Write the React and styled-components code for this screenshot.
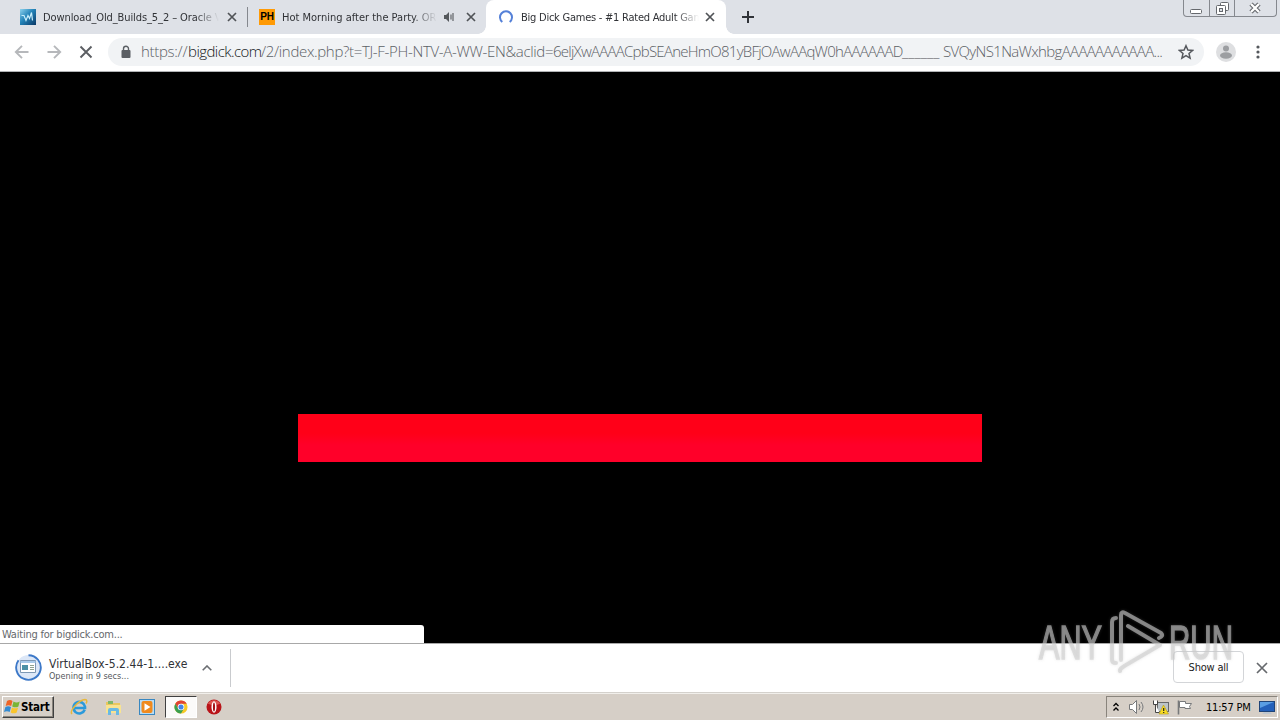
import React from 'react';
import styled, { createGlobalStyle } from 'styled-components';

const GlobalStyle = createGlobalStyle`
  * {
    box-sizing: border-box;
  }

  body {
    margin: 0;
    overflow: hidden;
    font-family: 'DejaVu Sans Condensed', 'DejaVu Sans', sans-serif;
    font-stretch: condensed;
    font-size: 11px;
    color: #303236;
  }

  svg {
    display: block;
    flex: none;
  }
`;

const Screen = styled.div`
  position: relative;
  width: 1280px;
  height: 720px;
  display: flex;
  flex-direction: column;
  overflow: hidden;
  background: #000;
`;

const TabStrip = styled.div`
  height: 34px;
  display: flex;
  background: #dee1e7;
`;

const Tab = styled.div`
  position: relative;
  width: ${(props) => props.$width}px;
  height: 34px;
  padding-left: ${(props) => props.$pad}px;
  padding-right: ${(props) => (props.$active ? 12 : 11)}px;
  display: flex;
  align-items: center;
  background: ${(props) => (props.$active ? '#fff' : 'transparent')};
  border-radius: ${(props) => (props.$active ? '8px 8px 0 0' : '0')};

  &::before,
  &::after {
    content: '';
    display: ${(props) => (props.$active ? 'block' : 'none')};
    position: absolute;
    bottom: 0;
    width: 8px;
    height: 8px;
  }

  &::before {
    left: -8px;
    background: radial-gradient(circle at 0 0, transparent 7.5px, #fff 8px);
  }

  &::after {
    right: -8px;
    background: radial-gradient(circle at 100% 0, transparent 7.5px, #fff 8px);
  }
`;

const TabTitle = styled.div`
  width: ${(props) => props.$width}px;
  margin-left: 7px;
  margin-right: auto;
  padding-top: 1px;
  overflow: hidden;
  white-space: nowrap;
  line-height: 16px;
  letter-spacing: ${(props) => props.$spacing || 0}px;
  mask-image: linear-gradient(to right, #000 calc(100% - 24px), transparent);
`;

const TabDivider = styled.div`
  width: 1px;
  height: 20px;
  margin-top: 7px;
  background: #85888e;
`;

const PhIcon = styled.div`
  width: 16px;
  height: 16px;
  flex: none;
  background: #ff9a05;
  color: #000;
  font: bold 10px/16px 'Liberation Sans', sans-serif;
  letter-spacing: -0.2px;
  text-align: center;
`;

const NewTab = styled.div`
  width: 28px;
  margin-left: 8px;
  display: flex;
  align-items: center;
  justify-content: center;
`;

const WindowButtons = styled.div`
  width: 94px;
  height: 17px;
  margin-left: auto;
  margin-right: 3px;
  display: grid;
  grid-template-columns: 25px 25px 1fr;
  border: 1px solid #85888e;
  border-top: none;
  border-radius: 0 0 4px 4px;
`;

const WindowButton = styled.div`
  display: flex;
  align-items: center;
  justify-content: center;

  & + & {
    border-left: 1px solid #85888e;
  }
`;

const Toolbar = styled.div`
  height: 38px;
  padding: 0 13px 1px 14px;
  display: flex;
  align-items: center;
  background: #fff;
  border-bottom: 1px solid #b1b3b5;
`;

const NavButtons = styled.div`
  width: 94px;
  display: flex;
  gap: 16px;
`;

const AddressBar = styled.div`
  width: 1096px;
  height: 28px;
  padding: 0 10px;
  display: flex;
  align-items: center;
  background: #f1f3f5;
  border-radius: 14px;
`;

const Url = styled.div`
  width: 1029px;
  margin-left: 7px;
  margin-right: auto;
  padding-bottom: 2px;
  display: flex;
  font: 300 15px/20px 'Open Sans', sans-serif;
  font-stretch: normal;
  white-space: pre;
  color: #5c6166;
`;

const UrlPart = styled.span`
  width: ${(props) => props.$width}px;
  flex: none;
  letter-spacing: ${(props) => props.$spacing}px;
  color: ${(props) => (props.$host ? '#15171a' : 'inherit')};
`;

const Page = styled.div`
  height: 571px;
  padding-top: 342px;
  background: #000;
`;

const Banner = styled.div`
  width: 684px;
  height: 48px;
  margin: 0 auto;
  background: linear-gradient(#ff0018, #ff0018 40%, #ff0029 65%, #ff0029);
`;

const StatusBubble = styled.div`
  position: absolute;
  left: 0;
  top: 625px;
  width: 424px;
  height: 18px;
  padding-left: 2px;
  background: #fff;
  border-radius: 0 3px 0 0;
  line-height: 19px;
  letter-spacing: -0.22px;
  color: #65686c;
`;

const Shelf = styled.div`
  height: 50px;
  padding: 0 13px 1px 15px;
  display: flex;
  align-items: center;
  background: #fff;
  border-top: 1px solid #a8a8a8;
  border-bottom: 1px solid #d4d1cc;
`;

const Download = styled.div`
  width: 216px;
  height: 38px;
  padding-right: 18px;
  display: flex;
  align-items: center;
  border-right: 1px solid #c9cbce;
`;

const FileInfo = styled.div`
  margin-left: 7px;
  margin-right: auto;
  padding-top: 3px;
  white-space: nowrap;
`;

const FileName = styled.div`
  font-size: 12px;
  line-height: 13px;
  letter-spacing: 0.05px;
`;

const FileStatus = styled.div`
  font-size: 9px;
  line-height: 10px;
  color: #55585c;
`;

const ShowAll = styled.div`
  width: 71px;
  height: 32px;
  margin-left: auto;
  margin-right: 13px;
  margin-bottom: 2px;
  border: 1px solid #d3d5d8;
  border-radius: 4px;
  line-height: 31px;
  text-align: center;
  letter-spacing: -0.2px;
  color: #222;
`;

const Taskbar = styled.div`
  height: 27px;
  padding: 2px;
  display: flex;
  align-items: center;
  background: #d6cfc7;
  border-top: 1px solid #f1efeb;
`;

const StartButton = styled.div`
  width: 52px;
  height: 22px;
  padding-left: 1px;
  display: flex;
  align-items: center;
  border: 1px solid;
  border-color: #fff #404040 #404040 #fff;
  box-shadow: inset -1px -1px #89847c;
  font-size: 11.5px;
  font-weight: bold;
  letter-spacing: -0.2px;
  color: #000;
`;

const Launchers = styled.div`
  margin-left: 8px;
  display: flex;
`;

const Launcher = styled.div`
  width: ${(props) => (props.$pressed ? 32 : 34)}px;
  height: 22px;
  margin-left: ${(props) => (props.$pressed ? 1 : 0)}px;
  display: flex;
  align-items: center;
  justify-content: center;
  border: 1px solid;
  border-color: ${(props) => (props.$pressed ? '#404040 #fff #fff #404040' : 'transparent')};
  background: ${(props) => (props.$pressed ? '#fbfaf9' : 'transparent')};
`;

const Tray = styled.div`
  width: 172px;
  height: 22px;
  margin-left: auto;
  padding: 0 2px 0 6px;
  display: flex;
  align-items: center;
  border: 1px solid;
  border-color: #89847c #fff #fff #89847c;
  color: #000;
`;

const Clock = styled.div`
  width: 47px;
  margin-left: 13px;
  margin-right: auto;
  white-space: nowrap;
  letter-spacing: -0.2px;
`;

const TrayIcon = styled.div`
  margin-left: ${(props) => props.$gap || 0}px;
`;

const Watermark = styled.div`
  position: absolute;
  left: 1036px;
  top: 606px;
  filter: drop-shadow(0 0 1.5px rgba(150, 150, 150, 0.4));
`;

const CloseIcon = ({ size = 8, color = '#505357', width = 1.7 }) => (
    <svg width={size} height={size} viewBox="0 0 8 8" overflow="visible">
        <path d="M0 0 8 8M8 0 0 8" stroke={color} strokeWidth={(width * 8) / size} fill="none" />
    </svg>
);

const VmIcon = () => (
    <svg width="16" height="16" viewBox="0 0 16 16">
        <defs>
            <linearGradient id="vm" x1="0" y1="0" x2="1" y2="1">
                <stop offset="0" stopColor="#8ed3ee" />
                <stop offset=".45" stopColor="#2383b8" />
                <stop offset="1" stopColor="#0a3765" />
            </linearGradient>
        </defs>
        <rect width="16" height="16" fill="url(#vm)" />
        <path d="M1.500 6.500h2.500l2 5 2-5 1.500 3 2-6 1 8" stroke="#c9effc" strokeWidth="1.200" fill="none" />
    </svg>
);

const SpeakerIcon = () => (
    <svg width="11" height="10" viewBox="0 0 11 10">
        <path d="M0 3h2l3-3v10L2 7H0z" fill="#55585c" />
        <path d="M7 2.500v5M9 1v8" stroke="#55585c" strokeWidth="1.100" />
    </svg>
);

const Spinner = () => (
    <svg width="16" height="16" viewBox="0 0 16 16">
        <path d="M4.300 13A6 6 0 1 1 11.700 13" stroke="#5581d8" strokeWidth="2" fill="none" />
    </svg>
);

const Arrow = ({ flip }) => (
    <svg width="16" height="16" viewBox="0 0 16 16">
        <path
            d="M14.500 8H2M8 1.800 1.800 8 8 14.200"
            transform={flip ? 'translate(16 0) scale(-1 1)' : undefined}
            stroke="#b6b8bb"
            strokeWidth="1.900"
            fill="none"
        />
    </svg>
);

const StartFlag = () => (
    <svg width="17" height="16" viewBox="0 0 17 16">
        <path d="M3 2Q6 0 8.500 2L7.200 7Q4.500 5.300 1.700 7z" fill="#ee6426" />
        <path d="M9.500 2.500Q12.500 4.300 15.700 2.500L14.400 7.500Q11.500 9.200 8.200 7.500z" fill="#79b536" />
        <path d="M1.400 8Q4.200 6.300 7 8L5.700 13Q3 11.300 0 13z" fill="#348bd2" />
        <path d="M8 8.500Q11 10.200 14.100 8.500L12.700 13.500Q9.700 15.200 6.700 13.500z" fill="#fac52c" />
    </svg>
);

const IeIcon = () => (
    <svg width="18" height="18" viewBox="0 0 18 18">
        <path
            d="M14.700 11.800A5.800 5.800 0 1 1 15 8.800L15 10H5"
            stroke="#2b9adb"
            strokeWidth="2.600"
            fill="none"
        />
        <path d="M2 16C-1 13 9 2 15 1.500 17.500 1.500 17 4 16 5.500" stroke="#e8b83b" strokeWidth="1.500" fill="none" />
    </svg>
);

const FolderIcon = () => (
    <svg width="17" height="17" viewBox="0 0 17 17">
        <path d="M1 3h5l1 1h8v10H1z" fill="#e9c65e" />
        <path d="M3 2h5v3H3z" fill="#7fb86a" />
        <path d="M1 6h15v8H1z" fill="#f8e391" />
        <path d="M3 16v-5q0-2 2-2h7q2 0 2 2v5h-3v-4H6v4z" fill="#69b9e4" />
    </svg>
);

const PlayerIcon = () => (
    <svg width="16" height="16" viewBox="0 0 16 16">
        <rect x=".5" y=".5" width="15" height="15" fill="#b8dcf4" stroke="#3987c0" />
        <rect x="2.500" y="2" width="11" height="12" rx="2" fill="#f08a1d" />
        <path d="M5.500 4.200 11.500 8 5.500 11.800z" fill="#fff" />
    </svg>
);

const ChromeIcon = () => (
    <svg width="14" height="14" viewBox="0 0 16 16">
        <circle cx="8" cy="8" r="7.500" fill="#f7c927" />
        <path d="M1.500 4.250A7.500 7.500 0 0 1 14.500 4.250H8L4.800 9.800z" fill="#e04334" />
        <path d="M1.500 4.250A7.500 7.500 0 0 0 8 15.500L11.200 9.900H5z" fill="#3a9f50" />
        <circle cx="8" cy="8" r="3.800" fill="#fff" />
        <circle cx="8" cy="8" r="2.900" fill="#4384e8" />
    </svg>
);

const OperaIcon = () => (
    <svg width="16" height="16" viewBox="0 0 17 17">
        <circle cx="8.500" cy="8.500" r="8" fill="#b91419" />
        <path d="M2 5a7.500 7.500 0 0 1 13 0q-6 3-13 0z" fill="#dd5550" />
        <ellipse cx="8.500" cy="8.500" rx="2.700" ry="6" fill="#fff" />
        <ellipse cx="8.500" cy="8.500" rx="1.100" ry="4.800" fill="#a51216" />
    </svg>
);

const DownloadIcon = () => (
    <svg width="27" height="27" viewBox="0 0 27 27">
        <circle cx="13.500" cy="13.500" r="12.500" fill="#dce7f7" />
        <path
            d="M13.500 1.200A12.300 12.300 0 1 1 3.500 6.300"
            stroke="#3c78c8"
            strokeWidth="1.900"
            fill="none"
        />
        <path d="M5.500 6.500h15v12h-15z" fill="#fff" stroke="#7d98b5" />
        <path d="M5.500 7h15v2h-15z" fill="#a9cbea" />
        <path d="M7 11h6v5H7z" fill="#4c91a6" />
        <path d="M15 11.500h4M15 13.500h4M15 15.500h4" stroke="#8fa38f" />
    </svg>
);

const AnyRunMark = () => (
    <svg width="200" height="72" viewBox="0 0 200 72">
        <g
            fill="#cfcfcf"
            stroke="#cfcfcf"
            strokeWidth="1.600"
            opacity=".6"
            fontFamily="'Liberation Sans Narrow', 'Liberation Sans', sans-serif"
            fontSize="49"
        >
            <text x="3" y="53" textLength="63" lengthAdjust="spacingAndGlyphs">ANY</text>
            <text x="133" y="53" textLength="64" lengthAdjust="spacingAndGlyphs">RUN</text>
        </g>
        <g fill="none" stroke="#cfcfcf" opacity=".6" strokeWidth="4" strokeLinejoin="round" strokeLinecap="round">
            <path d="M80 12Q76 12 76 16V54Q76 57 80 57" />
            <path d="M85 54V9Q85 5 89 7L125 27Q128 30 123 32" />
            <path d="M92 20 124 39 90 59Q83 63 84 65" />
        </g>
    </svg>
);

const App = () => {
    return (
        <Screen>
            <GlobalStyle />
            <TabStrip>
                <Tab $width={247} $pad={20}>
                    <VmIcon />
                    <TabTitle $width={176} $spacing={-0.1}>Download_Old_Builds_5_2 – Oracle VM</TabTitle>
                    <CloseIcon />
                </Tab>
                <TabDivider />
                <Tab $width={238} $pad={11}>
                    <PhIcon>PH</PhIcon>
                    <TabTitle $width={155}>Hot Morning after the Party. ORG</TabTitle>
                    <SpeakerIcon />
                    <TrayIcon $gap={12}><CloseIcon /></TrayIcon>
                </Tab>
                <Tab $width={240} $pad={12} $active>
                    <Spinner />
                    <TabTitle $width={178} $spacing={-0.24}>Big Dick Games - #1 Rated Adult Games</TabTitle>
                    <CloseIcon />
                </Tab>
                <NewTab>
                    <svg width="12" height="12" viewBox="0 0 12 12">
                        <path d="M6 0v12M0 6h12" stroke="#303338" strokeWidth="2" />
                    </svg>
                </NewTab>
                <WindowButtons>
                    <WindowButton>
                        <svg width="13" height="13" viewBox="0 0 13 13">
                            <rect x=".5" y="7.500" width="11" height="4" rx="1" fill="#fff" stroke="#65686d" />
                        </svg>
                    </WindowButton>
                    <WindowButton>
                        <svg width="13" height="13" viewBox="0 0 13 13">
                            <rect x="4.500" y=".5" width="8" height="8" rx="1" fill="#fff" stroke="#65686d" />
                            <rect x=".5" y="3.500" width="9" height="9" rx="1" fill="#fff" stroke="#65686d" />
                            <rect x="3.500" y="6.500" width="3" height="3" fill="#dee1e7" stroke="#65686d" />
                        </svg>
                    </WindowButton>
                    <WindowButton>
                        <svg width="13" height="12" viewBox="0 0 13 12">
                            <path d="M2 2 10 10M10 2 2 10" stroke="#65686d" strokeWidth="4.500" />
                            <path d="M2 2 10 10M10 2 2 10" stroke="#fff" strokeWidth="2.300" />
                        </svg>
                    </WindowButton>
                </WindowButtons>
            </TabStrip>

            <Toolbar>
                <NavButtons>
                    <Arrow />
                    <Arrow flip />
                    <svg width="16" height="16" viewBox="0 0 16 16">
                        <path d="M2.500 2.500 13.500 13.500M13.500 2.500 2.500 13.500" stroke="#5b5e62" strokeWidth="1.900" />
                    </svg>
                </NavButtons>
                <AddressBar>
                    <svg width="16" height="16" viewBox="0 0 16 16">
                        <rect x="3.500" y="6" width="9" height="8" rx="1" fill="#5b5f64" />
                        <path d="M5.500 7V4.800a2.500 2.500 0 0 1 5 0V7" stroke="#5b5f64" strokeWidth="1.400" fill="none" />
                    </svg>
                    <Url>
                        <UrlPart $width={47} $spacing={-0.3}>https://</UrlPart>
                        <UrlPart $width={73} $spacing={-0.55} $host>bigdick.com</UrlPart>
                        <UrlPart $width={292} $spacing={-0.33}>/2/index.php?t=TJ-F-PH-NTV-A-WW-EN&amp;aclid=</UrlPart>
                        <UrlPart $width={349} $spacing={-0.75}>6eljXwAAAACpbSEAneHmO81yBFjOAwAAqW0hAAAAAAD</UrlPart>
                        <UrlPart $width={41} $spacing={0.1}>______</UrlPart>
                        <UrlPart $width={220} $spacing={-0.66}>SVQyNS1NaWxhbgAAAAAAAAAAA...</UrlPart>
                    </Url>
                    <svg width="16" height="16" viewBox="0 0 16 16">
                        <path
                            d="M8 1.700 9.900 6 14.600 6.400 11 9.500 12.100 14.100 8 11.700 3.900 14.100 5 9.500 1.400 6.400 6.100 6z"
                            stroke="#55585d"
                            strokeWidth="1.500"
                            fill="none"
                        />
                    </svg>
                </AddressBar>
                <TrayIcon $gap={12}>
                    <svg width="20" height="20" viewBox="0 0 20 20">
                        <circle cx="10" cy="10" r="10" fill="#dedfe1" />
                        <circle cx="10" cy="6.500" r="3" fill="#9c9ea1" />
                        <ellipse cx="10" cy="13.500" rx="6" ry="3.200" fill="#9c9ea1" />
                    </svg>
                </TrayIcon>
                <TrayIcon $gap={20}>
                    <svg width="4" height="14" viewBox="0 0 4 14" fill="#55585d">
                        <circle cx="2" cy="2" r="1.600" />
                        <circle cx="2" cy="7" r="1.600" />
                        <circle cx="2" cy="12" r="1.600" />
                    </svg>
                </TrayIcon>
            </Toolbar>

            <Page>
                <Banner />
            </Page>

            <Shelf>
                <Download>
                    <DownloadIcon />
                    <FileInfo>
                        <FileName>VirtualBox-5.2.44-1....exe</FileName>
                        <FileStatus>Opening in 9 secs...</FileStatus>
                    </FileInfo>
                    <svg width="10" height="6" viewBox="0 0 10 6">
                        <path d="M.7 5.300 5 1 9.300 5.300" stroke="#6b6e72" strokeWidth="1.600" fill="none" />
                    </svg>
                </Download>
                <ShowAll>Show all</ShowAll>
                <CloseIcon size={10} color="#66696d" />
            </Shelf>

            <Taskbar>
                <StartButton>
                    <StartFlag />
                    Start
                </StartButton>
                <Launchers>
                    <Launcher><IeIcon /></Launcher>
                    <Launcher><FolderIcon /></Launcher>
                    <Launcher><PlayerIcon /></Launcher>
                    <Launcher $pressed><ChromeIcon /></Launcher>
                    <Launcher><OperaIcon /></Launcher>
                </Launchers>
                <Tray>
                    <svg width="6" height="10" viewBox="0 0 6 10">
                        <path d="M.5 4 3 1.500 5.500 4M.5 8.500 3 6 5.500 8.500" stroke="#000" strokeWidth="1.300" fill="none" />
                    </svg>
                    <TrayIcon $gap={10}>
                        <svg width="16" height="14" viewBox="0 0 16 14">
                            <path d="M.5 4.500h3l4-4v13l-4-4h-3z" fill="#fff" stroke="#77797b" />
                            <path d="M10 4q2 3 0 6M12 2q4 5 0 10" stroke="#77797b" fill="none" />
                        </svg>
                    </TrayIcon>
                    <TrayIcon $gap={8}>
                        <svg width="17" height="15" viewBox="0 0 17 15">
                            <rect x="4.500" y="2.500" width="11" height="9" fill="#bcc4c9" stroke="#66686a" />
                            <path d="M.5.5v4h4v-4M2.500 4.500v8h4" stroke="#444" fill="#fff" />
                            <path d="M10.500 5 15.500 14H6z" fill="#f8dc24" stroke="#b39a17" strokeWidth=".6" />
                            <path d="M10.700 8v3M10.700 12v1" stroke="#222" strokeWidth="1.200" />
                        </svg>
                    </TrayIcon>
                    <TrayIcon $gap={7}>
                        <svg width="16" height="15" viewBox="0 0 16 15">
                            <path d="M1.500.5v14" stroke="#77797b" strokeWidth="1.600" />
                            <path d="M2.500 1.500h6v2h6l-2 3 1 2H8v-1H2.500z" fill="#fff" stroke="#77797b" />
                        </svg>
                    </TrayIcon>
                    <Clock>11:57 PM</Clock>
                    <svg width="16" height="14" viewBox="0 0 16 14">
                        <rect x=".5" y="1.500" width="15" height="10" fill="#2360ba" stroke="#1f4478" />
                        <path d="M1 2h14L1 8z" fill="#599de3" />
                        <path d="M5 12h6l2 2H3z" fill="#bdc6cf" />
                    </svg>
                </Tray>
            </Taskbar>

            <StatusBubble>Waiting for bigdick.com...</StatusBubble>
            <Watermark>
                <AnyRunMark />
            </Watermark>
        </Screen>
    );
};

export default App;
